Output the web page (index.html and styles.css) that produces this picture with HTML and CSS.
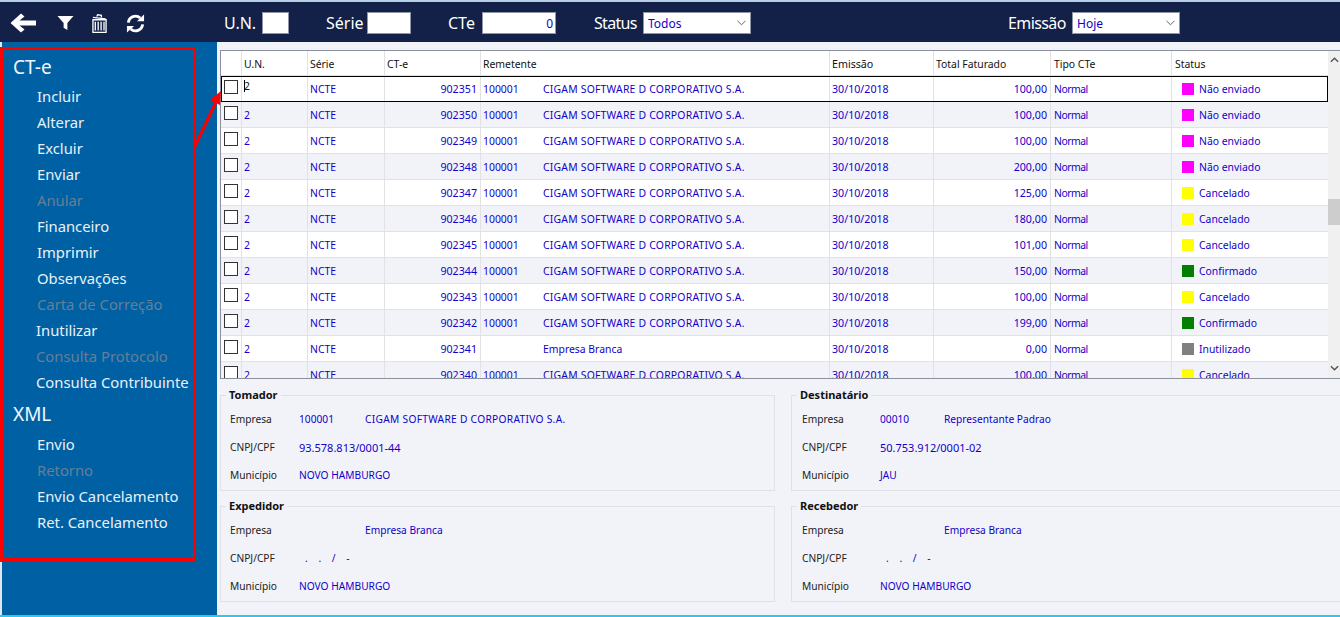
FILE: index.html
```html
<!DOCTYPE html>
<html lang="pt-BR">
<head>
<meta charset="utf-8">
<title>CT-e</title>
<link rel="stylesheet" href="styles.css">
</head>
<body>
<div class="app">
  <header class="topbar">
    <div class="tools">
      <svg class="ic-back" viewBox="0 0 26 20"><path d="M11 0.5 L14.5 3.5 L9.5 7.5 H26 V12.5 H9.5 L14.5 16.5 L11 19.5 L0.5 10 Z" fill="#fff"/></svg>
      <svg class="ic-filter" viewBox="0 0 18 16"><path d="M0.5 0.5 H17.5 L11 8 V15.5 L7 13 V8 Z" fill="#fff"/></svg>
      <svg class="ic-trash" viewBox="0 0 16 20"><path d="M1 6 H15 V19.5 H1 Z M3.5 8 V17.5 M6.6 8 V17.5 M9.7 8 V17.5 M12.8 8 V17.5" fill="none" stroke="#fff" stroke-width="1.4"/><path d="M1 3.5 L14.5 5 M5 2.5 L6 0.7 L10 1.2 L10 3.4" fill="none" stroke="#fff" stroke-width="1.4"/></svg>
      <svg class="ic-sync" viewBox="0 0 20 20"><path d="M2.5 9 A7.5 7.5 0 0 1 15 4.2" fill="none" stroke="#fff" stroke-width="3"/><path d="M11.5 7.5 H19 V0.5 Z" fill="#fff"/><path d="M17.5 11 A7.5 7.5 0 0 1 5 15.8" fill="none" stroke="#fff" stroke-width="3"/><path d="M8.5 12.5 H1 V19.5 Z" fill="#fff"/></svg>
    </div>
    <label class="flabel f-un">U.N.</label><input class="finput w-un" value="">
    <label class="flabel f-serie">Série</label><input class="finput w-serie" value="">
    <label class="flabel f-cte">CTe</label><input class="finput w-cte" value="0">
    <label class="flabel f-status">Status</label>
    <div class="fselect"><span>Todos</span><svg viewBox="0 0 10 6"><path d="M0.5 0.5 L5 5 L9.5 0.5" fill="none" stroke="#555" stroke-width="1"/></svg></div>
    <label class="flabel f-emissao">Emissão</label>
    <div class="fselect"><span>Hoje</span><svg viewBox="0 0 10 6"><path d="M0.5 0.5 L5 5 L9.5 0.5" fill="none" stroke="#555" stroke-width="1"/></svg></div>
  </header>

  <div class="body">
    <nav class="side">
      <h2>CT-e</h2>
      <a>Incluir</a>
      <a>Alterar</a>
      <a>Excluir</a>
      <a>Enviar</a>
      <a class="off">Anular</a>
      <a>Financeiro</a>
      <a>Imprimir</a>
      <a>Observações</a>
      <a class="off">Carta de Correção</a>
      <a class="in1">Inutilizar</a>
      <a class="off in1">Consulta Protocolo</a>
      <a class="in1">Consulta Contribuinte</a>
      <h2 class="h-xml">XML</h2>
      <a>Envio</a>
      <a class="off">Retorno</a>
      <a>Envio Cancelamento</a>
      <a>Ret. Cancelamento</a>
    </nav>

    <main class="content">
      <section class="gridwrap">
        <div class="grid">
          <div class="row head">
            <div></div><div>U.N.</div><div>Série</div><div>CT-e</div><div>Remetente</div><div>Emissão</div><div>Total Faturado</div><div>Tipo CTe</div><div>Status</div>
          </div>
          <div class="row current"><div class="ck"><i></i></div><div class="un"><b class="caret"></b>2</div><div>NCTE</div><div class="r">902351</div><div class="rem"><span>100001</span><span class="caps">CIGAM SOFTWARE D CORPORATIVO S.A.</span></div><div>30/10/2018</div><div class="r">100,00</div><div>Normal</div><div class="st"><i class="magenta"></i>Não enviado</div></div>
          <div class="row"><div class="ck"><i></i></div><div>2</div><div>NCTE</div><div class="r">902350</div><div class="rem"><span>100001</span><span class="caps">CIGAM SOFTWARE D CORPORATIVO S.A.</span></div><div>30/10/2018</div><div class="r">100,00</div><div>Normal</div><div class="st"><i class="magenta"></i>Não enviado</div></div>
          <div class="row"><div class="ck"><i></i></div><div>2</div><div>NCTE</div><div class="r">902349</div><div class="rem"><span>100001</span><span class="caps">CIGAM SOFTWARE D CORPORATIVO S.A.</span></div><div>30/10/2018</div><div class="r">100,00</div><div>Normal</div><div class="st"><i class="magenta"></i>Não enviado</div></div>
          <div class="row"><div class="ck"><i></i></div><div>2</div><div>NCTE</div><div class="r">902348</div><div class="rem"><span>100001</span><span class="caps">CIGAM SOFTWARE D CORPORATIVO S.A.</span></div><div>30/10/2018</div><div class="r">200,00</div><div>Normal</div><div class="st"><i class="magenta"></i>Não enviado</div></div>
          <div class="row"><div class="ck"><i></i></div><div>2</div><div>NCTE</div><div class="r">902347</div><div class="rem"><span>100001</span><span class="caps">CIGAM SOFTWARE D CORPORATIVO S.A.</span></div><div>30/10/2018</div><div class="r">125,00</div><div>Normal</div><div class="st"><i class="yellow"></i>Cancelado</div></div>
          <div class="row"><div class="ck"><i></i></div><div>2</div><div>NCTE</div><div class="r">902346</div><div class="rem"><span>100001</span><span class="caps">CIGAM SOFTWARE D CORPORATIVO S.A.</span></div><div>30/10/2018</div><div class="r">180,00</div><div>Normal</div><div class="st"><i class="yellow"></i>Cancelado</div></div>
          <div class="row"><div class="ck"><i></i></div><div>2</div><div>NCTE</div><div class="r">902345</div><div class="rem"><span>100001</span><span class="caps">CIGAM SOFTWARE D CORPORATIVO S.A.</span></div><div>30/10/2018</div><div class="r">101,00</div><div>Normal</div><div class="st"><i class="yellow"></i>Cancelado</div></div>
          <div class="row"><div class="ck"><i></i></div><div>2</div><div>NCTE</div><div class="r">902344</div><div class="rem"><span>100001</span><span class="caps">CIGAM SOFTWARE D CORPORATIVO S.A.</span></div><div>30/10/2018</div><div class="r">150,00</div><div>Normal</div><div class="st"><i class="green"></i>Confirmado</div></div>
          <div class="row"><div class="ck"><i></i></div><div>2</div><div>NCTE</div><div class="r">902343</div><div class="rem"><span>100001</span><span class="caps">CIGAM SOFTWARE D CORPORATIVO S.A.</span></div><div>30/10/2018</div><div class="r">100,00</div><div>Normal</div><div class="st"><i class="yellow"></i>Cancelado</div></div>
          <div class="row"><div class="ck"><i></i></div><div>2</div><div>NCTE</div><div class="r">902342</div><div class="rem"><span>100001</span><span class="caps">CIGAM SOFTWARE D CORPORATIVO S.A.</span></div><div>30/10/2018</div><div class="r">199,00</div><div>Normal</div><div class="st"><i class="green"></i>Confirmado</div></div>
          <div class="row"><div class="ck"><i></i></div><div>2</div><div>NCTE</div><div class="r">902341</div><div class="rem"><span></span><span>Empresa Branca</span></div><div>30/10/2018</div><div class="r">0,00</div><div>Normal</div><div class="st"><i class="gray"></i>Inutilizado</div></div>
          <div class="row"><div class="ck"><i></i></div><div>2</div><div>NCTE</div><div class="r">902340</div><div class="rem"><span>100001</span><span class="caps">CIGAM SOFTWARE D CORPORATIVO S.A.</span></div><div>30/10/2018</div><div class="r">100,00</div><div>Normal</div><div class="st"><i class="yellow"></i>Cancelado</div></div>
        </div>
        <div class="scroll">
          <svg viewBox="0 0 10 6"><path d="M1 5 L5 1 L9 5" fill="none" stroke="#555" stroke-width="1.6"/></svg>
          <div class="thumb"></div>
          <svg viewBox="0 0 10 6"><path d="M1 1 L5 5 L9 1" fill="none" stroke="#555" stroke-width="1.6"/></svg>
        </div>
      </section>

      <section class="panels">
        <fieldset class="box">
          <legend>Tomador</legend>
          <div class="lines">
            <span class="l">Empresa</span><span>100001</span><span class="caps">CIGAM SOFTWARE D CORPORATIVO S.A.</span>
            <span class="l">CNPJ/CPF</span><span class="wide num">93.578.813/0001-44</span>
            <span class="l">Município</span><span class="wide">NOVO HAMBURGO</span>
          </div>
        </fieldset>
        <fieldset class="box b2">
          <legend>Destinatário</legend>
          <div class="lines">
            <span class="l">Empresa</span><span>00010</span><span>Representante Padrao</span>
            <span class="l">CNPJ/CPF</span><span class="wide num">50.753.912/0001-02</span>
            <span class="l">Município</span><span class="wide">JAU</span>
          </div>
        </fieldset>
        <fieldset class="box">
          <legend>Expedidor</legend>
          <div class="lines">
            <span class="l">Empresa</span><span></span><span>Empresa Branca</span>
            <span class="l">CNPJ/CPF</span><span class="wide mask">. . / -</span>
            <span class="l">Município</span><span class="wide">NOVO HAMBURGO</span>
          </div>
        </fieldset>
        <fieldset class="box b2">
          <legend>Recebedor</legend>
          <div class="lines">
            <span class="l">Empresa</span><span></span><span>Empresa Branca</span>
            <span class="l">CNPJ/CPF</span><span class="wide mask">. . / -</span>
            <span class="l">Município</span><span class="wide">NOVO HAMBURGO</span>
          </div>
        </fieldset>
      </section>
    </main>
  </div>

  <div class="redbox"></div>
  <svg class="redarrow" viewBox="0 0 40 70"><path d="M4 62 L26 16" fill="none" stroke="#f00" stroke-width="3"/><path d="M31 5 L20 14 L30 19 Z" fill="#f00"/></svg>
</div>
</body>
</html>
```

FILE: styles.css
```css
* { box-sizing: border-box; }
html, body { margin: 0; padding: 0; height: 100%; overflow: hidden; }
body { font-family: "Noto Sans", "DejaVu Sans", sans-serif; background: #f1f3f9; }

.app {
  position: relative;
  width: 1340px;
  height: 617px;
  display: flex;
  flex-direction: column;
  border-top: 2px solid #b6cee6;
  border-bottom: 2px solid #2dc9e8;
  overflow: hidden;
}

/* top bar */
.topbar {
  height: 40px;
  flex: none;
  background: #132047;
  display: flex;
  align-items: center;
  padding-top: 2px;
  color: #fff;
  font-size: 16px;
}
.tools { display: flex; align-items: center; width: 224px; padding-left: 10px; }
.ic-back { width: 26px; height: 20px; }
.ic-filter { width: 17px; height: 16px; margin-left: 21px; }
.ic-trash { width: 15px; height: 19px; margin-left: 18px; }
.ic-sync { width: 19px; height: 19px; margin-left: 19px; }

.flabel { line-height: 20px; white-space: nowrap; }
.f-un { width: 38px; }
.f-serie { margin-left: 37px; width: 41px; }
.f-cte { margin-left: 37px; width: 34px; }
.f-status { margin-left: 38px; width: 49px; letter-spacing: -0.7px; }
.f-emissao { margin-left: 257px; width: 64px; letter-spacing: -0.6px; }

.finput {
  height: 22px;
  border: 1px solid #8f96a8;
  background: #fff;
  color: #1200c8;
  font: 12px "Noto Sans", sans-serif;
  text-align: right;
  padding: 0 2px;
}
.w-un { width: 27px; }
.w-serie { width: 44px; }
.w-cte { width: 74px; }

.fselect {
  width: 108px;
  height: 22px;
  border: 1px solid #8f96a8;
  background: #fff;
  color: #1200c8;
  font-size: 12px;
  display: flex;
  align-items: center;
  justify-content: space-between;
  padding: 0 4px 0 4px;
}
.fselect svg { width: 9px; height: 6px; }

/* body */
.body { flex: 1; display: flex; min-height: 0; }

.side {
  width: 217px;
  flex: none;
  background: #0060a4;
  border-left: 2px solid #dfe8f2;
  padding-top: 12px;
  color: #e9f1f8;
  font-size: 14.8px;
  display: flex;
  flex-direction: column;
}
.side h2 {
  margin: 0;
  padding-left: 11px;
  height: 26px;
  line-height: 26px;
  font-size: 19px;
  font-weight: 400;
  color: #f2f7fb;
}
.side .h-xml { margin-top: 6px; }
.side h2 + a { margin-top: 3px; }
.side .h-xml + a { margin-top: 4px; }
.side a { height: 26px; line-height: 26px; padding-left: 35px; white-space: nowrap; }
.side a.in1 { padding-left: 34px; }
.side a.off { color: #667f96; }

.content {
  flex: 1;
  min-width: 0;
  padding: 8px 0 0 3px;
  display: flex;
  flex-direction: column;
  overflow: hidden;
}

/* grid */
.gridwrap {
  height: 329px;
  flex: none;
  display: flex;
  border: 1px solid #8b909c;
  border-right: 0;
  background: #fff;
  color: #1200c8;
  font-size: 10.4px;
}
.caps { letter-spacing: 0.22px; }
.grid { flex: 1; min-width: 0; overflow: hidden; }
.row {
  display: grid;
  grid-template-columns: 21px 66px 77px 96px 349px 104px 117px 121px 1fr;
  height: 26px;
  background: #fff;
  border-bottom: 1px solid #e2e2e4;
}
.row:nth-child(odd) { background: #f1f3f9; }
.row > div {
  display: flex;
  align-items: center;
  padding: 1px 3px 0 2px;
  border-right: 1px solid #e2e2e4;
  white-space: nowrap;
  overflow: hidden;
}
.row > div:last-child { border-right: 0; }
.row > div:nth-child(6) { font-size: 10.67px; }
.row > div:nth-child(n+8) { padding-left: 3px; }
.row:not(.head) > div:nth-child(8) { letter-spacing: -0.5px; }
.row > .r { justify-content: flex-end; font-size: 10.67px; }
.row > .rem span:first-child { width: 60px; flex: none; }
.row > .ck { padding: 0 0 0 3px; }
.ck i { width: 14px; height: 14px; border: 1px solid #333; background: #fff; display: block; margin-top: -3px; }
.row > div.st:nth-child(n+8) { padding-left: 10px; }
.st i { width: 12px; height: 12px; margin-right: 5px; flex: none; }
.magenta { background: #ff00ff; }
.yellow { background: #ffff00; }
.green { background: #008000; }
.gray { background: #808080; }

.head { height: 25px; color: #111; }
.head.row { background: #fff; }
.row.current { outline: 1px solid #000; outline-offset: -1px; background: #fff; position: relative; }
.row > .un { color: #111; padding-bottom: 6px; padding-top: 0; }
.caret { width: 1px; height: 12px; background: #000; margin-right: -1px; }

.scroll {
  width: 12px;
  flex: none;
  background: #f0f0f0;
  display: flex;
  flex-direction: column;
  align-items: center;
  padding-top: 6px;
}
.scroll svg { width: 9px; height: 6px; flex: none; }
.thumb { width: 12px; height: 26px; background: #cdcdcd; margin: 136px 0 140px; flex: none; }

/* detail panels */
.panels {
  width: 1135px;
  display: grid;
  grid-template-columns: 555px 1fr;
  grid-auto-rows: 103px;
  row-gap: 8px;
  column-gap: 16px;
  margin-top: 9px;
  color: #1200c8;
  font-size: 10.2px;
}
.box {
  margin: 0;
  padding: 0 0 0 9px;
  min-width: 0;
  border: 1px solid #dfe1e5;
}
.box.b2 { padding-left: 10px; }
.box legend {
  margin-left: -4px;
  padding: 0 3px;
  font-weight: 700;
  font-size: 11px;
  line-height: 14px;
  color: #111;
}
.box.b2 legend { margin-left: -5px; }
.lines {
  display: grid;
  grid-template-columns: 69px 66px 1fr;
  grid-auto-rows: 28px;
  align-items: center;
  margin-top: 3px;
}
.lines .caps { letter-spacing: 0.3px; }
.b2 .lines { grid-template-columns: 78px 64px 1fr; }
.lines .l { color: #222; }
.lines .wide { grid-column: 2 / 4; }
.lines .num { font-size: 11px; }
.lines .mask { padding-left: 6px; word-spacing: 8px; }

/* annotation */
.redbox {
  position: absolute;
  left: -1px;
  top: 45px;
  width: 197px;
  height: 515px;
  border: 3px solid #f00;
  border-left-width: 4px;
  border-bottom-width: 4px;
  pointer-events: none;
}
.redarrow {
  position: absolute;
  left: 190px;
  top: 84px;
  width: 40px;
  height: 70px;
  pointer-events: none;
}
```
